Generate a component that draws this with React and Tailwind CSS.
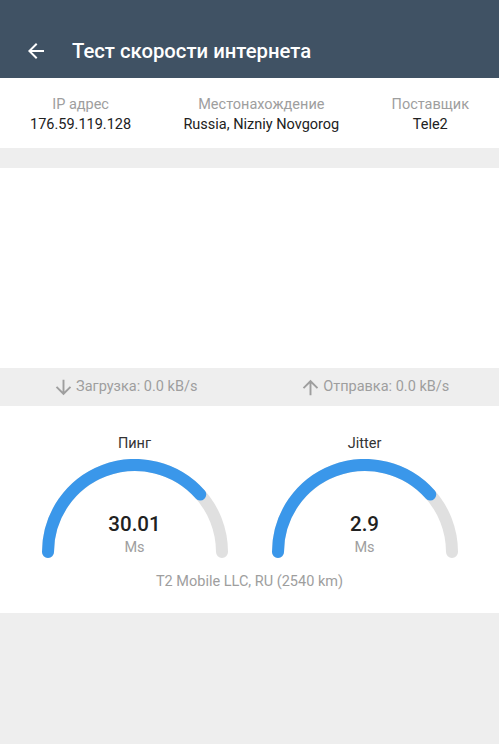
import React from "react";

const font = { fontFamily: "Roboto, 'Noto Sans', sans-serif" };

function Gauge({ label, value, fraction }) {
  const cx = 94;
  const cy = 93;
  const r = 87;
  const a = Math.PI * (1 - fraction);
  const ex = cx + r * Math.cos(a);
  const ey = cy - r * Math.sin(a);
  return (
    <div className="flex w-[188px] flex-col items-center">
      <div className="text-[14.5px] leading-5 text-[#333333]">{label}</div>
      <div className="relative mt-[5px] h-[100px] w-[188px]">
        <svg width="188" height="100" viewBox="0 0 188 100">
          <path
            d={`M ${cx - r} ${cy} A ${r} ${r} 0 0 1 ${cx + r} ${cy}`}
            fill="none"
            stroke="#e0e0e0"
            strokeWidth="12"
            strokeLinecap="round"
          />
          <path
            d={`M ${cx - r} ${cy} A ${r} ${r} 0 0 1 ${ex} ${ey}`}
            fill="none"
            stroke="#3a97ea"
            strokeWidth="12"
            strokeLinecap="round"
          />
        </svg>
        <div className="absolute inset-x-0 top-[51px] flex flex-col items-center">
          <div className="text-[20.5px] font-medium leading-7 text-[#212121]">{value}</div>
          <div className="text-[14.5px] leading-5 text-[#9e9e9e]">Ms</div>
        </div>
      </div>
    </div>
  );
}

function Arrow({ down }) {
  return (
    <svg width="23" height="23" viewBox="0 0 24 24" fill="#9e9e9e" className="mr-[1px]">
      {down ? (
        <path d="M20 12l-1.41-1.41L13 16.17V4h-2v12.17l-5.58-5.59L4 12l8 8 8-8z" />
      ) : (
        <path d="M4 12l1.41 1.41L11 7.83V20h2V7.83l5.58 5.59L20 12l-8-8-8 8z" />
      )}
    </svg>
  );
}

export default function App() {
  return (
    <div className="min-h-[744px] w-full bg-[#eeeeee]" style={font}>
      <header className="flex h-[78px] items-end bg-[#405264] pb-[13px]">
        <div className="flex items-center">
          <svg width="24" height="24" viewBox="0 0 24 24" fill="#ffffff" className="ml-[24px]">
            <path d="M20 11H7.83l5.59-5.59L12 4l-8 8 8 8 1.41-1.41L7.83 13H20v-2z" />
          </svg>
          <h1 className="ml-[24px] text-[20.3px] font-medium leading-7 text-white">
            Тест скорости интернета
          </h1>
        </div>
      </header>

      <section className="flex justify-between bg-white px-[30px] pb-[13px] pt-[17px] text-[14.5px] leading-5">
        <div className="flex flex-col items-center">
          <span className="text-[#9e9e9e]">IP адрес</span>
          <span className="text-[#212121]">176.59.119.128</span>
        </div>
        <div className="flex flex-col items-center">
          <span className="text-[#9e9e9e]">Местонахождение</span>
          <span className="text-[#212121]">Russia, Nizniy Novgorog</span>
        </div>
        <div className="flex flex-col items-center">
          <span className="text-[#9e9e9e]">Поставщик</span>
          <span className="text-[#212121]">Tele2</span>
        </div>
      </section>

      <div className="mt-[20px] h-[200px] bg-white" />

      <div className="grid h-[38px] grid-cols-2 items-center text-[14.5px] text-[#9e9e9e]">
        <div className="flex items-center justify-center">
          <Arrow down />
          <span>Загрузка: 0.0 kB/s</span>
        </div>
        <div className="flex items-center justify-center">
          <Arrow />
          <span>Отправка: 0.0 kB/s</span>
        </div>
      </div>

      <section className="flex flex-col items-center bg-white pb-[21px] pt-[28px]">
        <div className="flex gap-[42px]">
          <Gauge label="Пинг" value="30.01" fraction={0.77} />
          <Gauge label="Jitter" value="2.9" fraction={0.77} />
        </div>
        <div className="mt-[13px] text-[14.5px] leading-5 text-[#9e9e9e]">T2 Mobile LLC, RU (2540 km)</div>
      </section>
    </div>
  );
}
